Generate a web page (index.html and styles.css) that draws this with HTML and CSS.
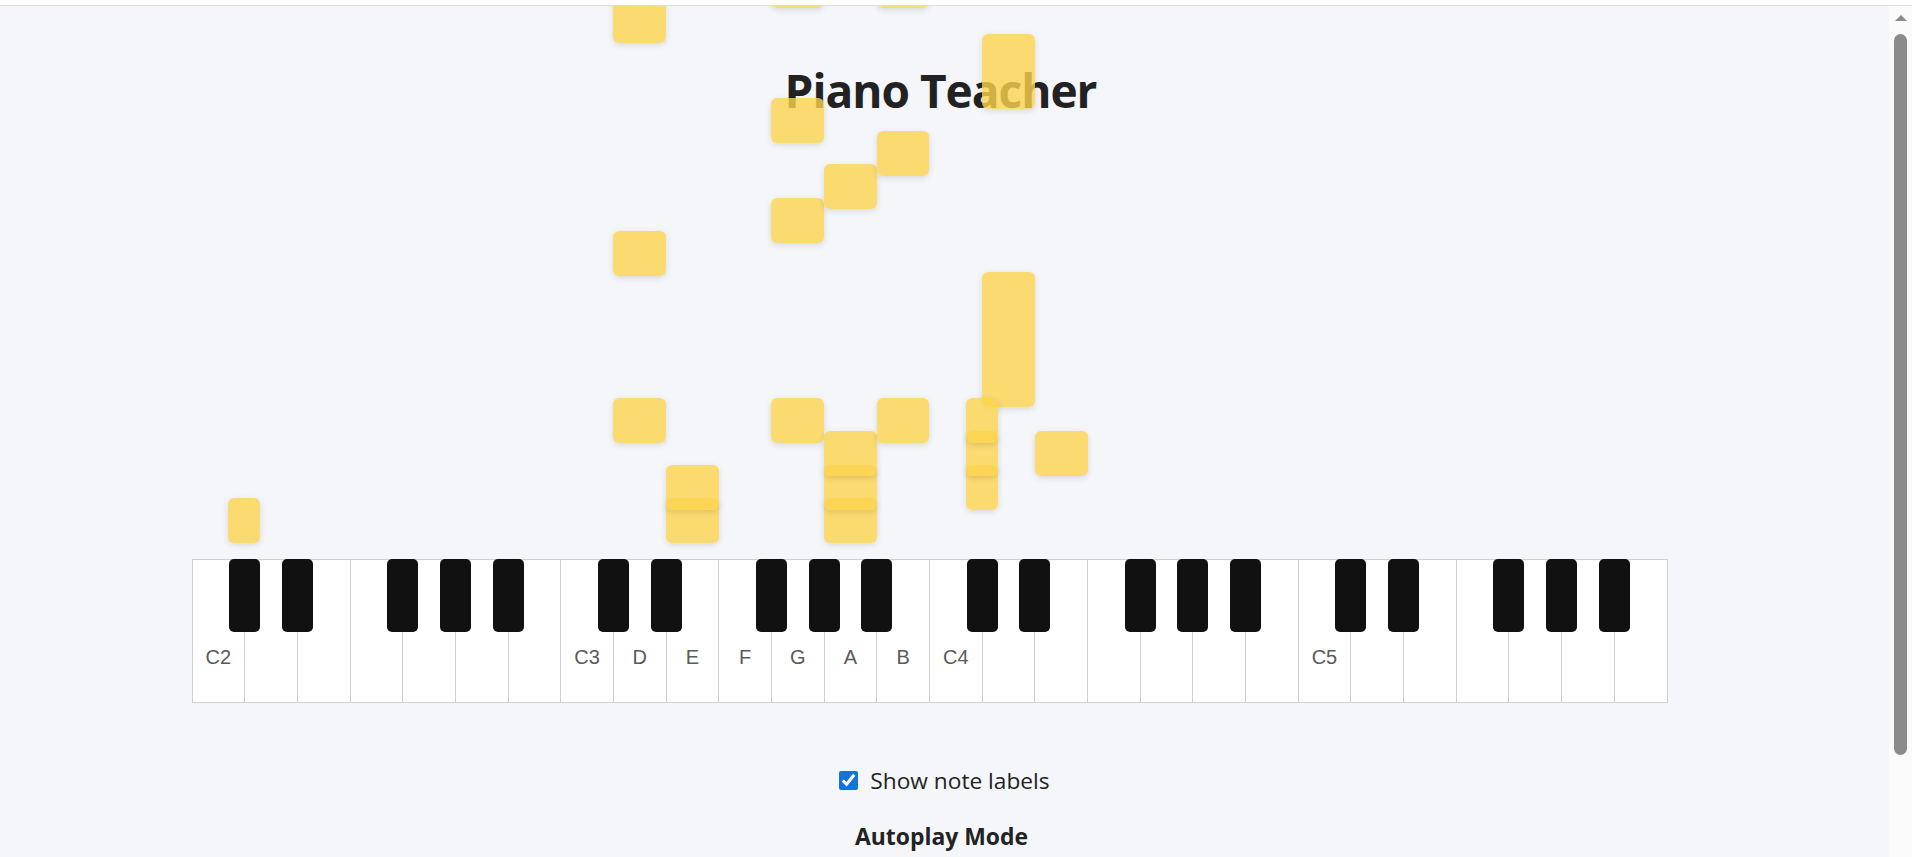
FILE: index.html
```html
<!DOCTYPE html>
<html lang="en">
<head>
<meta charset="utf-8">
<title>Piano Teacher</title>
<link rel="stylesheet" href="styles.css">
</head>
<body>
<div class="window-edge"></div>
<div class="viewport">
  <main class="app">
    <section class="board">
      <h1 class="title">Piano Teacher</h1>
      <div class="keyboard-wrap">
        <div class="keyboard-col">
          <div class="lane">
            <div class="note" style="left:28.571%;width:3.571%;top:392px;height:45px"></div>
            <div class="note" style="left:28.571%;width:3.571%;top:225px;height:45px"></div>
            <div class="note" style="left:28.571%;width:3.571%;top:-8px;height:45px"></div>

            <div class="note" style="left:32.143%;width:3.571%;top:492px;height:45px"></div>
            <div class="note" style="left:32.143%;width:3.571%;top:459px;height:45px"></div>

            <div class="note" style="left:39.286%;width:3.571%;top:392px;height:45px"></div>
            <div class="note" style="left:39.286%;width:3.571%;top:192px;height:45px"></div>
            <div class="note" style="left:39.286%;width:3.571%;top:92px;height:45px"></div>
            <div class="note" style="left:39.286%;width:3.571%;top:-43px;height:45px"></div>

            <div class="note" style="left:42.857%;width:3.571%;top:492px;height:45px"></div>
            <div class="note" style="left:42.857%;width:3.571%;top:459px;height:45px"></div>
            <div class="note" style="left:42.857%;width:3.571%;top:425px;height:45px"></div>
            <div class="note" style="left:42.857%;width:3.571%;top:158px;height:45px"></div>

            <div class="note" style="left:46.429%;width:3.571%;top:392px;height:45px"></div>
            <div class="note" style="left:46.429%;width:3.571%;top:125px;height:45px"></div>
            <div class="note" style="left:46.429%;width:3.571%;top:-43px;height:45px"></div>

            <div class="note" style="left:53.571%;width:3.571%;top:266px;height:135px"></div>
            <div class="note" style="left:53.571%;width:3.571%;top:28px;height:75px"></div>

            <div class="note" style="left:57.143%;width:3.571%;top:425px;height:45px"></div>

            <div class="note sharp" style="left:calc(53.571% - 16px);top:459px;height:45px"></div>
            <div class="note sharp" style="left:calc(53.571% - 16px);top:425px;height:45px"></div>
            <div class="note sharp" style="left:calc(53.571% - 16px);top:392px;height:45px"></div>

            <div class="note sharp" style="left:calc(3.571% - 16px);top:492px;height:45px"></div>
          </div>
          <div class="piano">
            <div class="white"><span class="label">C2</span><span class="black"></span></div>
            <div class="white"><span class="black"></span></div>
            <div class="white"></div>
            <div class="white"><span class="black"></span></div>
            <div class="white"><span class="black"></span></div>
            <div class="white"><span class="black"></span></div>
            <div class="white"></div>
            <div class="white"><span class="label">C3</span><span class="black"></span></div>
            <div class="white"><span class="label">D</span><span class="black"></span></div>
            <div class="white"><span class="label">E</span></div>
            <div class="white"><span class="label">F</span><span class="black"></span></div>
            <div class="white"><span class="label">G</span><span class="black"></span></div>
            <div class="white"><span class="label">A</span><span class="black"></span></div>
            <div class="white"><span class="label">B</span></div>
            <div class="white"><span class="label">C4</span><span class="black"></span></div>
            <div class="white"><span class="black"></span></div>
            <div class="white"></div>
            <div class="white"><span class="black"></span></div>
            <div class="white"><span class="black"></span></div>
            <div class="white"><span class="black"></span></div>
            <div class="white"></div>
            <div class="white"><span class="label">C5</span><span class="black"></span></div>
            <div class="white"><span class="black"></span></div>
            <div class="white"></div>
            <div class="white"><span class="black"></span></div>
            <div class="white"><span class="black"></span></div>
            <div class="white"><span class="black"></span></div>
            <div class="white"></div>
          </div>
        </div>
      </div>
    </section>

    <label class="toggle"><input type="checkbox" class="toggle-box" checked> <span>Show note labels</span></label>

    <h3 class="section-title">Autoplay Mode</h3>
  </main>
  <div class="scrollbar" aria-hidden="true">
    <span class="scroll-arrow"></span>
    <span class="scroll-thumb"></span>
  </div>
</div>
</body>
</html>
```

FILE: styles.css
```css
* {
  box-sizing: border-box;
}

html {
  background: #f5f6fa;
}

body {
  margin: 0;
  background: #f5f6fa;
  color: #222;
  font-family: "Open Sans", "Noto Sans", sans-serif;
}

.window-edge {
  height: 6px;
  background: #fff;
  border-bottom: 1px solid #dedede;
}

.viewport {
  display: flex;
  min-height: calc(100vh - 6px);
}

.app {
  flex: 1;
  min-width: 0;
  display: flex;
  flex-direction: column;
  align-items: center;
}

.scrollbar {
  flex: none;
  width: 23px;
  background: #fafafa;
  display: flex;
  flex-direction: column;
  align-items: center;
}

.scroll-arrow {
  margin-top: 9px;
  width: 0;
  height: 0;
  border-left: 6px solid transparent;
  border-right: 6px solid transparent;
  border-bottom: 6px solid #8b8b8b;
}

.scroll-thumb {
  margin-top: 13px;
  width: 13px;
  height: 721px;
  border-radius: 7px;
  background: #8b8b8b;
}

.board {
  display: grid;
  width: 100%;
}

.title {
  grid-area: 1 / 1;
  align-self: start;
  margin: 56px 0 0;
  padding-right: 8px;
  text-align: center;
  font-size: 46px;
  line-height: 56px;
  font-weight: 700;
  letter-spacing: -1px;
  color: #222;
}

.keyboard-wrap {
  grid-area: 1 / 1;
  display: flex;
  justify-content: center;
  padding-right: 30px;
}

.keyboard-col {
  width: 1476px;
  display: flex;
  flex-direction: column;
}

.lane {
  position: relative;
  height: 553px;
  overflow: hidden;
}

.note {
  position: absolute;
  background: rgba(252, 211, 77, 0.8);
  border-radius: 6px;
  box-shadow: 0 2px 6px rgba(0, 0, 0, 0.12);
}

.note.sharp {
  width: 32px;
}

.piano {
  position: relative;
  isolation: isolate;
  display: flex;
  height: 144px;
  border: 1px solid #cfcfcf;
  background: #fff;
}

.white {
  position: relative;
  flex: 1;
  display: flex;
  align-items: flex-end;
  justify-content: center;
  padding-bottom: 33px;
  border-right: 1px solid #cfcfcf;
  background: #fff;
}

.white:last-child {
  border-right: 0;
}

.label {
  font-family: "Liberation Sans", Arial, sans-serif;
  font-size: 20px;
  color: #5a5a5a;
}

.black {
  position: absolute;
  top: -1px;
  right: -16px;
  width: 31px;
  height: 73px;
  background: #111;
  border-radius: 5px;
  z-index: 1;
}

.toggle {
  display: flex;
  align-items: center;
  gap: 12px;
  margin-top: 62px;
  font-size: 22.7px;
  color: #222;
}

.toggle-box {
  width: 19px;
  height: 19px;
  margin: 0;
  accent-color: #1174d6;
}

.section-title {
  margin: 25px 0 0;
  padding-right: 6px;
  font-size: 22.9px;
  font-weight: 700;
  color: #222;
}
```
